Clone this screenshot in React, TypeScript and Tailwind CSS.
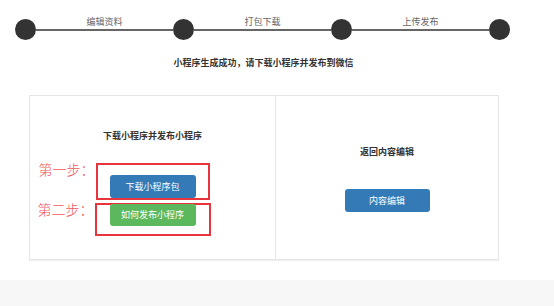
import React from "react";

const cn = "font-['Microsoft_YaHei','Noto_Sans_CJK_SC',sans-serif]";

const steps = ["编辑资料", "打包下载", "上传发布"];

function Dot() {
  return <div className="h-[21px] w-[21px] shrink-0 rounded-full bg-[#333333]" />;
}

function StepBar() {
  return (
    <div className="flex items-end pl-[15px] pt-[16px]">
      {steps.map((label) => (
        <React.Fragment key={label}>
          <Dot />
          <div className="flex w-[137px] flex-col items-center">
            <span className="text-[9px] leading-[12px] text-[#666666]">{label}</span>
            <div className="mb-[9px] mt-[1px] h-[2px] w-full bg-[#666666]" />
          </div>
        </React.Fragment>
      ))}
      <Dot />
    </div>
  );
}

function Step({ label, children }: { label: string; children: React.ReactNode }) {
  return (
    <div className="relative">
      <span className="absolute right-full top-[-3px] mr-[1px] whitespace-nowrap text-[14px] font-light leading-[18px] text-[#f0585a]">
        {label}
      </span>
      {children}
    </div>
  );
}

export default function App() {
  return (
    <div className={`${cn} flex h-[306px] w-[554px] flex-col bg-white`}>
      <StepBar />
      <p className="mt-[17px] w-[527px] text-center text-[9px] font-bold leading-[12px] text-[#333333]">
        小程序生成成功，请下载小程序并发布到微信
      </p>
      <div className="ml-[29px] mt-[26px] flex h-[165px] w-[470px] border border-[#e6e6e6] shadow-[0_1px_1px_rgba(0,0,0,0.06)]">
        <div className="flex w-[246px] flex-col items-center border-r border-[#e6e6e6] pt-[34px]">
          <h3 className="text-[9px] font-bold leading-[12px] text-[#333333]">下载小程序并发布小程序</h3>
          <div className="mt-[21px] flex flex-col items-center gap-[3px]">
            <Step label="第一步：">
              <div className="flex w-[114px] justify-center border-2 border-[#e8343c] pt-[10px]">
                <button className="h-[23px] w-[86px] rounded-[3px] bg-[#337ab7] text-[9px] text-white">
                  下载小程序包
                </button>
              </div>
            </Step>
            <Step label="第二步：">
              <div className="flex w-[116px] justify-center border-2 border-[#e8343c] pb-[8px]">
                <button className="-mt-[1px] h-[22px] w-[86px] rounded-[3px] bg-[#5cb85c] text-[9px] text-white">
                  如何发布小程序
                </button>
              </div>
            </Step>
          </div>
        </div>
        <div className="flex flex-1 flex-col items-center pt-[50px]">
          <h3 className="text-[9px] font-bold leading-[12px] text-[#333333]">返回内容编辑</h3>
          <button className="mt-[31px] h-[23px] w-[85px] rounded-[3px] bg-[#337ab7] text-[9px] text-white">
            内容编辑
          </button>
        </div>
      </div>
      <div className="mt-auto h-[26px] bg-[#f7f7f7]" />
    </div>
  );
}
